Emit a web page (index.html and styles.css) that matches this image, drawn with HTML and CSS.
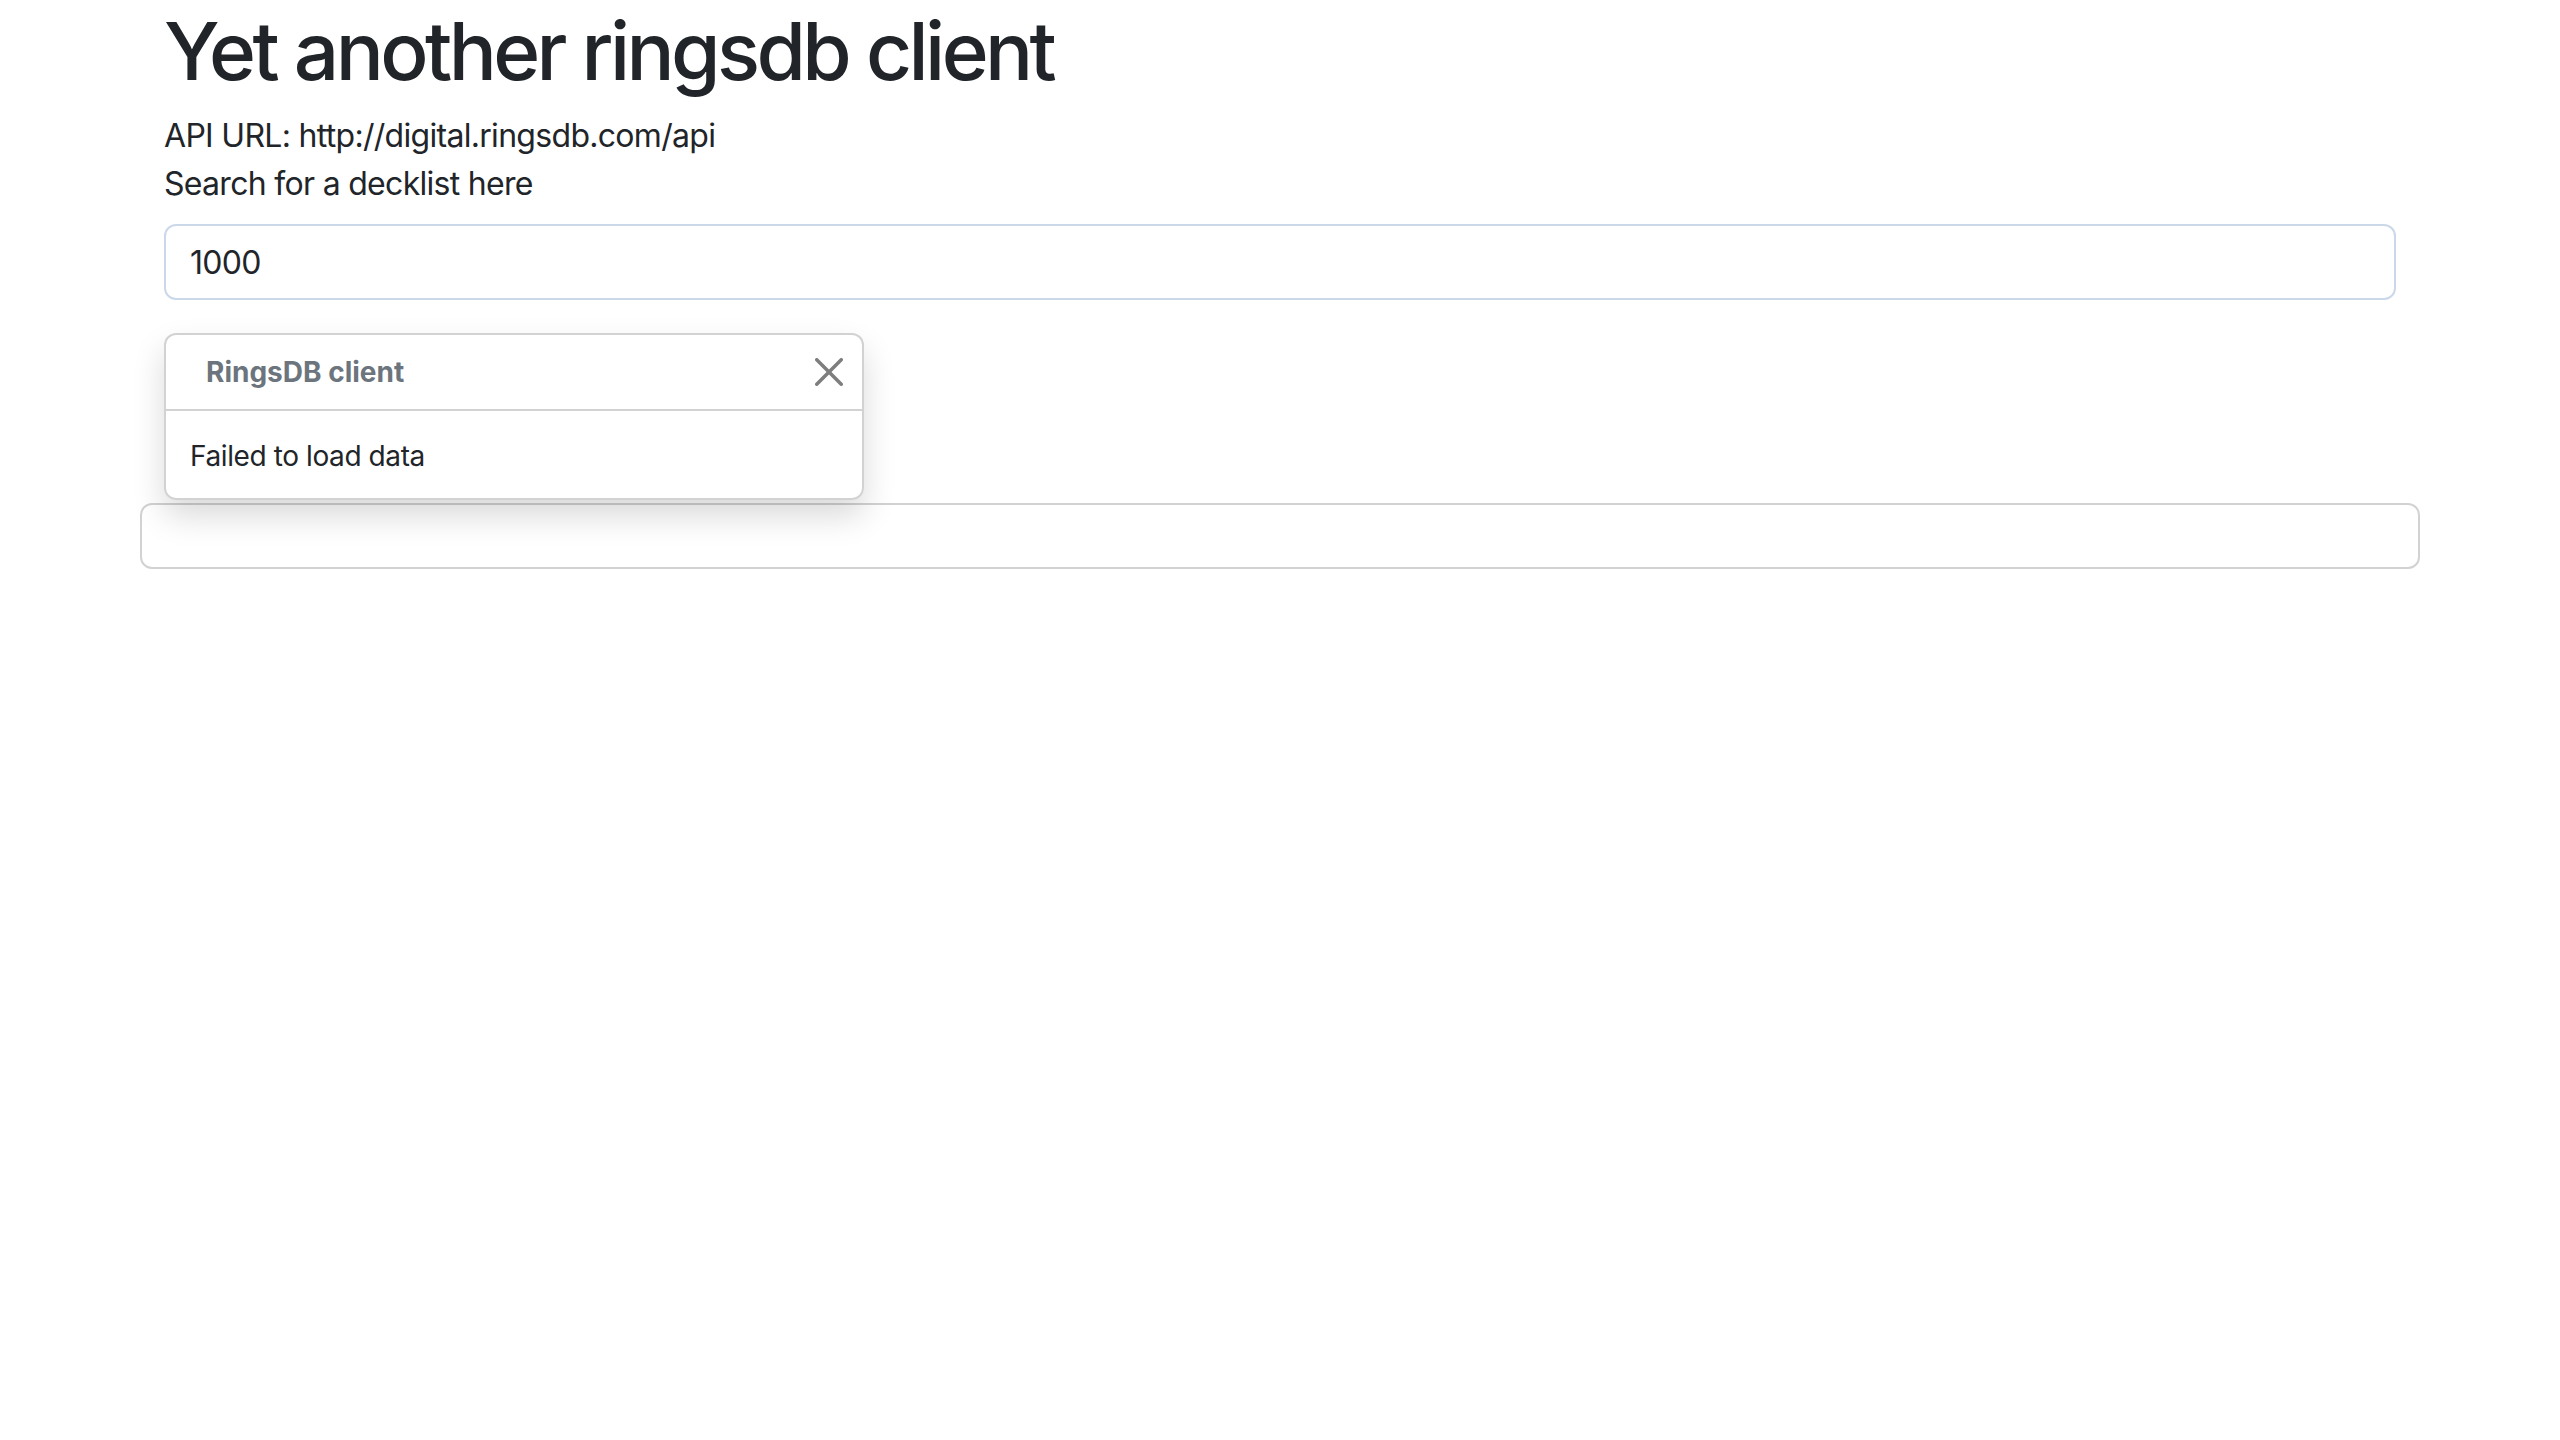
FILE: index.html
```html
<!DOCTYPE html>
<html lang="en">
<head>
<meta charset="utf-8">
<title>Yet another ringsdb client</title>
<link rel="stylesheet" href="styles.css">
</head>
<body>
<div class="container">
  <h1 class="title">Yet another ringsdb client</h1>
  <div class="line">API URL: http://digital.ringsdb.com/api</div>
  <label class="form-label" for="search">Search for a decklist here</label>
  <input class="form-control" id="search" type="text" value="1000">
  <div class="toast">
    <div class="toast-header">
      <strong class="toast-title">RingsDB client</strong>
      <button class="btn-close" type="button" aria-label="Close">
        <svg viewBox="0 0 16 16" width="28" height="28"><path fill="#000" d="M.293.293a1 1 0 0 1 1.414 0L8 6.586 14.293.293a1 1 0 1 1 1.414 1.414L9.414 8l6.293 6.293a1 1 0 0 1-1.414 1.414L8 9.414l-6.293 6.293a1 1 0 0 1-1.414-1.414L6.586 8 .293 1.707a1 1 0 0 1 0-1.414z"/></svg>
      </button>
    </div>
    <div class="toast-body">Failed to load data</div>
  </div>
  <div class="row">
    <div class="card"></div>
  </div>
</div>
</body>
</html>
```

FILE: styles.css
```css
* { box-sizing: border-box; }
html, body { margin: 0; padding: 0; background: #fff; }
body {
  font-family: Inter, "Noto Sans", sans-serif;
  font-size: 32px;
  line-height: 48px;
  letter-spacing: -0.7px;
  color: #212529;
}
.container {
  max-width: 2280px;
  margin: 0 auto;
  padding: 0 24px;
}
.title {
  font-size: 80px;
  font-weight: 500;
  line-height: 96px;
  margin: 0 0 13px;
  padding-top: 3px;
  letter-spacing: -3.6px;
}
.line { display: block; }
.form-label { display: block; margin-bottom: 16px; }
.form-control {
  display: block;
  width: 100%;
  height: 76px;
  padding: 12px 24px;
  font: inherit;
  letter-spacing: inherit;
  color: #212529;
  border: 2px solid #cbd8ea;
  border-radius: 12px;
  background: #fff;
  outline: none;
  margin-bottom: 33px;
}
.toast {
  width: 700px;
  font-size: 28px;
  line-height: 42px;
  letter-spacing: 0;
  background: rgba(255,255,255,.85);
  border: 2px solid rgba(0,0,0,.175);
  border-radius: 12px;
  box-shadow: 0 16px 32px rgba(0,0,0,.15);
  position: relative;
  z-index: 1;
  margin-bottom: 3px;
}
.toast-header {
  display: flex;
  align-items: center;
  padding: 16px 24px;
  color: #6c757d;
  border-bottom: 2px solid rgba(0,0,0,.175);
}
.toast-title {
  margin-left: 16px;
  margin-right: auto;
  font-weight: 700;
}
.btn-close {
  width: 42px;
  height: 42px;
  padding: 7px;
  margin: 0 -12px 0 24px;
  border: 0;
  background: transparent;
  opacity: .5;
  display: flex;
  align-items: center;
  justify-content: center;
}
.btn-close svg { display: block; }
.toast-body {
  padding: 24px 24px 21px;
  letter-spacing: -0.4px;
}
.row {
  display: flex;
  margin: 0 -24px;
}
.card {
  flex: 1;
  height: 66px;
  border: 2px solid rgba(0,0,0,.175);
  border-radius: 12px;
  background: #fff;
}
```
